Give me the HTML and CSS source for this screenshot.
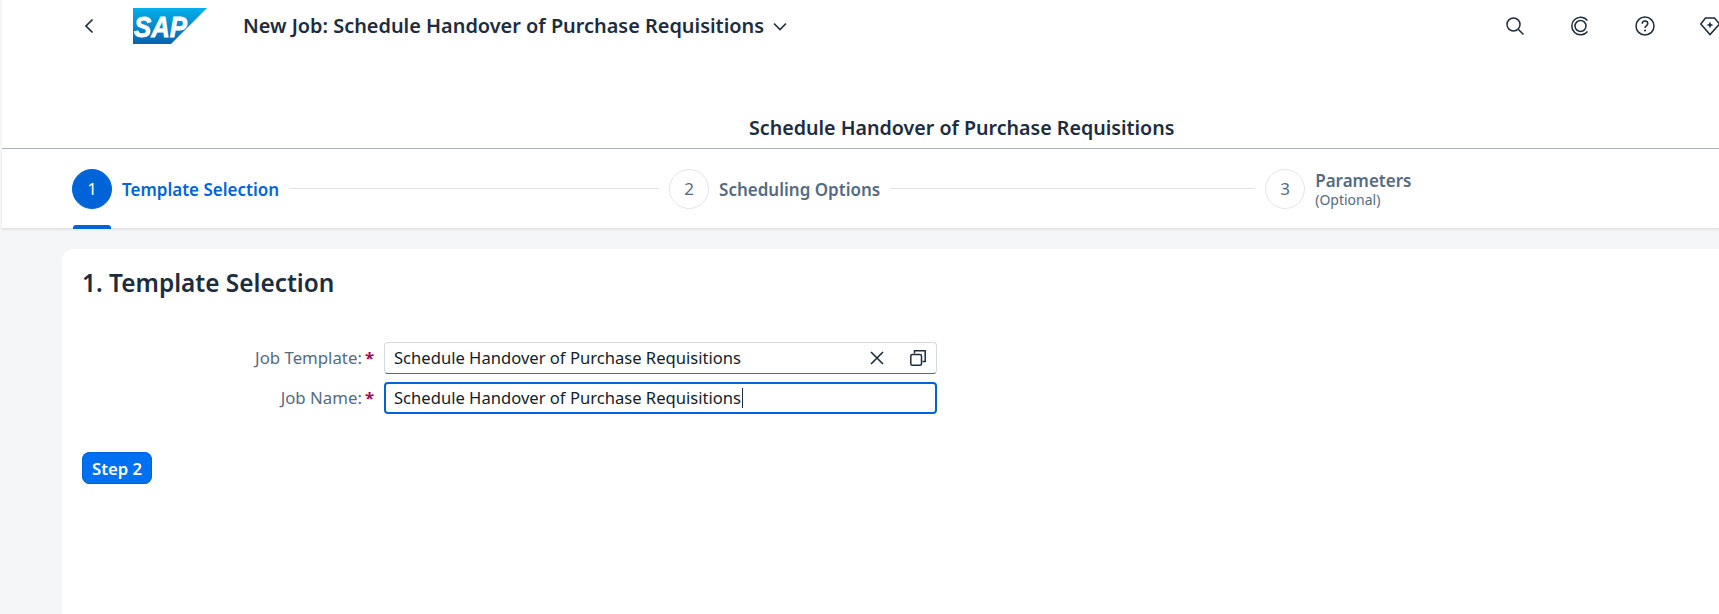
FILE: index.html
```html
<!DOCTYPE html>
<html lang="en">
<head>
<meta charset="utf-8">
<title>New Job</title>
<link rel="stylesheet" href="styles.css">
</head>
<body>
<div class="app">
  <header class="shell">
    <svg class="back" viewBox="0 0 10 16" width="10" height="16"><path d="M8.500 1.500 2 8l6.500 6.500" fill="none" stroke="#1d2d3e" stroke-width="1.700"/></svg>
    <svg class="logo" viewBox="0 0 74 36" width="74" height="36">
      <defs><linearGradient id="sapg" x1="0" y1="0" x2="0" y2="1"><stop offset="0" stop-color="#00b1eb"/><stop offset="1" stop-color="#0a62ae"/></linearGradient></defs>
      <path d="M0 0H74L38 36H0Z" fill="url(#sapg)"/>
      <text x="1" y="29" class="logo-text" textLength="53" lengthAdjust="spacingAndGlyphs">SAP</text>
    </svg>
    <div class="app-title">New Job: Schedule Handover of Purchase Requisitions
      <svg class="chev" viewBox="0 0 14 9" width="14" height="9"><path d="M1 1.500 7 7.500l6-6" fill="none" stroke="#1d2d3e" stroke-width="1.600"/></svg>
    </div>
    <div class="actions">
      <svg viewBox="0 0 20 20" width="20" height="20"><circle cx="8.500" cy="8.500" r="6.500" fill="none" stroke="#1d2d3e" stroke-width="1.500"/><path d="m13.500 13.500 5 5" stroke="#1d2d3e" stroke-width="1.500"/></svg>
      <svg viewBox="0 0 20 20" width="20" height="20"><path d="M17.500 15.500A8.800 8.800 0 1 1 17.500 4.500" fill="none" stroke="#1d2d3e" stroke-width="1.500"/><circle cx="10.500" cy="10" r="5.500" fill="none" stroke="#1d2d3e" stroke-width="1.500"/></svg>
      <svg viewBox="0 0 20 20" width="20" height="20"><circle cx="10" cy="10" r="9" fill="none" stroke="#1d2d3e" stroke-width="1.500"/><path d="M7.200 7.800C7.200 6 8.500 5 10 5s2.800 1 2.800 2.600c0 2.200-2.800 2.400-2.800 4.400" fill="none" stroke="#1d2d3e" stroke-width="1.500"/><circle cx="10" cy="14.500" r="1.100" fill="#1d2d3e"/></svg>
      <svg viewBox="0 0 20 20" width="20" height="20"><path d="M5.500 2h9l5 6L10 18.500.8 8Z" fill="none" stroke="#1d2d3e" stroke-width="1.500"/><path d="m10 5.500 1 2.500 2.500 1-2.500 1-1 2.500-1-2.500-2.500-1 2.500-1Z" fill="#1d2d3e"/></svg>
    </div>
  </header>
  <div class="page-title">Schedule Handover of Purchase Requisitions</div>
  <nav class="stepper">
    <div class="step active">
      <span class="num">1</span><span class="lbl">Template Selection</span>
      <span class="bar"></span>
    </div>
    <span class="line line1"></span>
    <div class="step">
      <span class="num">2</span><span class="lbl">Scheduling Options</span>
    </div>
    <span class="line line2"></span>
    <div class="step">
      <span class="num">3</span><span class="lbl two">Parameters<small>(Optional)</small></span>
    </div>
  </nav>
  <main class="content">
    <section class="card">
      <h2>1. Template Selection</h2>
      <form class="form">
        <label class="flabel">Job Template:<b>*</b></label>
        <div class="input">Schedule Handover of Purchase Requisitions
          <span class="icons">
            <svg viewBox="0 0 16 16" width="16" height="16"><path d="m2 2 12 12M14 2 2 14" stroke="#1d2d3e" stroke-width="1.600"/></svg>
            <svg viewBox="0 0 18 18" width="18" height="18"><path d="M5.500 4.500V1.800h10.700v10.700h-2.700" fill="none" stroke="#1d2d3e" stroke-width="1.500"/><rect x="1.800" y="5.500" width="10.700" height="10.700" rx="1.500" fill="none" stroke="#1d2d3e" stroke-width="1.500"/></svg>
          </span>
        </div>
        <label class="flabel">Job Name:<b>*</b></label>
        <div class="input focus">Schedule Handover of Purchase Requisitions<i class="caret"></i></div>
      </form>
      <button class="btn" type="button">Step 2</button>
    </section>
  </main>
</div>
</body>
</html>
```
FILE: styles.css
```css
* { box-sizing: border-box; }
html, body { margin: 0; height: 100%; overflow: hidden; }
body { font-family: "Noto Sans", "Liberation Sans", sans-serif; color: #1d2d3e; background: #f5f6f7; }
.app { width: 1719px; height: 614px; display: flex; flex-direction: column; }
.shell { height: 109px; background: #fff; margin-left: 2px; display: flex; align-items: flex-start; flex: none; }
.back { margin: 18px 0 0 82px; }
.logo { margin: 8px 0 0 39px; }
.logo-text { font: italic 700 30px "Liberation Sans", sans-serif; fill: #fff; stroke: #fff; stroke-width: .8px; }
.app-title { margin: 14px 0 0 36px; font-size: 19.9px; font-weight: 600; line-height: 24px; display: flex; align-items: center; gap: 9px; white-space: nowrap; }
.actions { margin: 16px 0 0 auto; display: flex; gap: 45px; width: 220px; flex: none; position: relative; left: 6px; }
.actions svg { flex: none; }
.page-title { height: 40px; margin-left: 2px; background: #fff; border-bottom: 1px solid #a9b4be; padding-left: 747px; font-size: 19.65px; font-weight: 600; line-height: 37px; flex: none; }
.stepper { height: 80px; margin-left: 2px; background: #fff; border-bottom: 1px solid #e0e2e4; display: flex; align-items: center; padding: 0 70px; flex: none; box-shadow: 0 1px 2px rgba(0,0,0,.08); }
.step { display: flex; align-items: center; position: relative; height: 40px; flex: none; }
.num { width: 40px; height: 40px; border-radius: 50%; border: 1px solid #e5e5e5; display: flex; align-items: center; justify-content: center; font-size: 17px; color: #556b82; background: #fff; }
.lbl { margin-left: 10px; padding-top: 2px; font-size: 17px; font-weight: 600; color: #556b82; white-space: nowrap; }
.two { line-height: 20px; }
.two small { display: block; font-size: 14px; font-weight: 400; line-height: 18px; }
.active .num { background: #0064d9; border-color: #0064d9; color: #fff; }
.active .lbl { color: #0064d9; }
.bar { position: absolute; left: 1px; top: 56px; width: 38px; height: 4px; background: #0064d9; border-radius: 3px 3px 0 0; }
.line { height: 1px; background: #e0e2e4; flex: none; margin: 0 10px; }
.line1 { width: 370px; }
.line2 { width: 365px; }
.content { flex: 1; padding: 20px 0 0 62px; min-height: 0; }
.card { background: #fff; height: 100%; border-radius: 12px 0 0 0; padding: 20px; }
.card h2 { margin: 0; font-size: 24.4px; font-weight: 600; line-height: 28px; }
.form { display: grid; grid-template-columns: 302px 553px; row-gap: 8px; margin-top: 45px; align-items: center; }
.flabel { text-align: right; font-size: 16.8px; line-height: 22px; color: #556b82; padding-right: 10px; }
.flabel b { font-weight: 700; color: #a1045c; margin-left: 3px; }
.input { height: 32px; border: 1px solid #d5dadd; border-bottom-color: #556b82; border-radius: 4px; padding: 0 9px; display: flex; align-items: center; font-size: 16.6px; line-height: 28px; color: #131e29; white-space: nowrap; background: #fff; position: relative; }
.focus { border: 2px solid #0064d9; padding: 0 8px; }
.caret { display: inline-block; width: 1px; height: 20px; background: #1d2d3e; margin-left: 1px; }
.icons { margin-left: auto; display: flex; align-items: center; gap: 24px; }
.btn { display: block; margin-top: 38px; width: 70px; height: 32px; border: 0; border-radius: 8px; background: #0070f2; color: #fff; font: 600 16.7px "Noto Sans", "Liberation Sans", sans-serif; box-shadow: 0 0 0 1px #0064d9 inset; }
```
